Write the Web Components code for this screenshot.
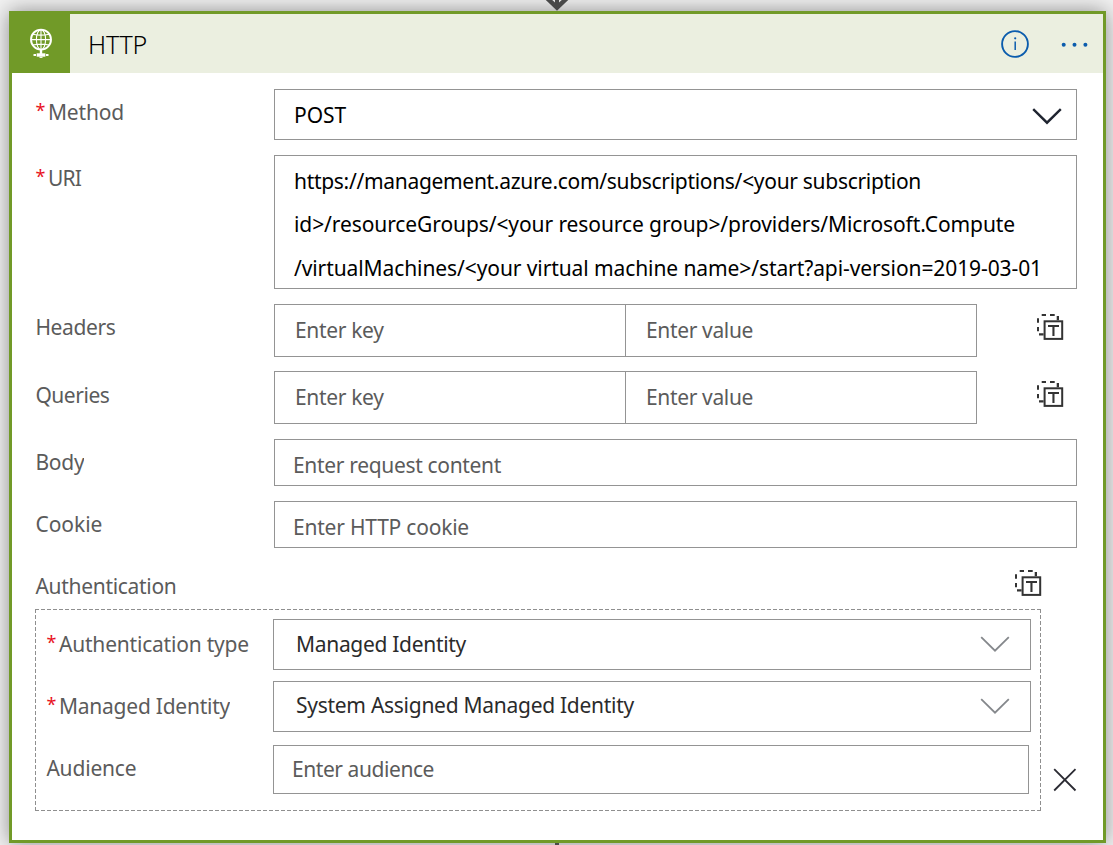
<!DOCTYPE html>
<html lang="en">
<head>
<meta charset="utf-8">
<title>HTTP action</title>
<style>
  html, body { margin: 0; height: 845px; overflow: hidden; }
  body { background: #f2f2f2; font-family: "Noto Sans", "Open Sans", sans-serif; font-size: 21px; color: #5b5b5b; }
</style>
</head>
<body>
<flow-canvas>
  <action-card>
    <fit-text slot="title" w="59" style="font-size:25px;line-height:30px;font-weight:350;color:#000">HTTP</fit-text>
    <form-row required style="--lt:11px"><fit-text slot="label" w="76">Method</fit-text>
      <select-box style="--h:51px;--pt:13px;--pl:19px;color:#000;--chev:#1f2430;--sw:2.4;--cr:14px"><fit-text w="52">POST</fit-text></select-box></form-row>
    <form-row required style="--gap:15px;--lt:11px"><fit-text slot="label" w="33">URI</fit-text>
      <text-box style="--h:134px;--pt:4px;--pl:19px;color:#000;line-height:43.4px"><fit-text w="627">https://management.azure.com/subscriptions/&lt;your subscription</fit-text><fit-text w="721">id&gt;/resourceGroups/&lt;your resource group&gt;/providers/Microsoft.Compute</fit-text><fit-text w="748">/virtualMachines/&lt;your virtual machine name&gt;/start?api-version=2019-03-01</fit-text></text-box></form-row>
    <form-row style="--gap:15px;--lt:11px"><fit-text slot="label" w="80">Headers</fit-text>
      <key-value></key-value></form-row>
    <form-row style="--gap:14px;--lt:12px"><fit-text slot="label" w="74">Queries</fit-text>
      <key-value></key-value></form-row>
    <form-row style="--gap:15px;--lt:11px"><fit-text slot="label" clip w="49">Body</fit-text>
      <text-box style="--h:47px;--pt:13px;--pl:18px"><fit-text w="208">Enter request content</fit-text></text-box></form-row>
    <form-row style="--gap:15px;--lt:11px"><fit-text slot="label" w="67">Cookie</fit-text>
      <text-box style="--h:47px;--pt:13px;--pl:18px"><fit-text w="176">Enter HTTP cookie</fit-text></text-box></form-row>
    <auth-group>
      <fit-text slot="heading" w="141">Authentication</fit-text>
      <form-row required style="--lt:13px"><fit-text slot="label" w="190">Authentication type</fit-text>
        <select-box style="--h:51px;--w:758px;--pt:12px;--pl:22px;color:#2b2b2b;--chev:#85888c;--sw:1.8;--cr:20px;--ct:16px"><fit-text w="170">Managed Identity</fit-text></select-box></form-row>
      <form-row required style="--gap:11px;--lt:13px"><fit-text slot="label" clip w="171">Managed Identity</fit-text>
        <select-box style="--h:51px;--w:758px;--pt:11px;--pl:22px;color:#2b2b2b;--chev:#85888c;--sw:1.8;--cr:20px;--ct:16px"><fit-text w="338">System Assigned Managed Identity</fit-text></select-box></form-row>
      <form-row style="--gap:13px;--lt:11px"><fit-text slot="label" w="90">Audience</fit-text>
        <text-box style="--h:49px;--w:756px;--pt:11px;--pl:18px"><fit-text w="142">Enter audience</fit-text></text-box></form-row>
    </auth-group>
  </action-card>
</flow-canvas>
<script>
const define = (name, html, setup) => {
  const t = document.createElement('template');
  t.innerHTML = html.trim();
  customElements.define(name, class extends HTMLElement {
    constructor() {
      super();
      this.attachShadow({ mode: 'open' }).append(t.content.cloneNode(true));
    }
    connectedCallback() { if (setup) setup(this); }
  });
};

// Canvas with the connector lines above and below the card
define('flow-canvas', `
<style>
  :host { display: block; position: relative; height: 845px; overflow: hidden; box-sizing: border-box; padding: 11px 7px 0 9px; }
  .top { position: absolute; left: 545px; top: 0; }
  .bottom { position: absolute; left: 555px; top: 843px; width: 4px; height: 2px; background: #4a4a4a; }
</style>
<slot></slot>
<svg class="top" width="24" height="11" viewBox="0 0 24 11"><path d="M.8 0H7.2L10 2.4V0H14V2.4L16.8 0H23.2L12 10.8Z" fill="#484848"/></svg>
<div class="bottom"></div>`);

define('action-card', `
<style>
  :host { display: block; box-sizing: border-box; width: 1097px; height: 832px; border: 3px solid #719a28; background: #fff; box-shadow: 0 0 20px rgba(0,0,0,.42); }
  header { display: flex; align-items: center; height: 59px; background: #ebefe0; }
  .brand { width: 58px; height: 59px; background: #719a28; }
  .brand svg, .tools svg { display: block; }
  .title { flex: 1; padding-left: 18px; }
  .tools { display: flex; align-items: center; gap: 30px; padding: 1px 14.5px 0 0; }
  main { padding: 16px 0 0 23px; }
</style>
<header>
  <div class="brand"><svg width="58" height="59" viewBox="12 14 58 59" fill="none" stroke="#fff">
    <circle cx="41" cy="39.6" r="10" stroke-width="1.9"/>
    <g stroke-width="1.1"><ellipse cx="41" cy="39.6" rx="4.6" ry="10"/><path d="M31 39.6H51M33 34.3Q41 36 49 34.3M33 45Q41 43.3 49 45M41 29.6V49.6" /></g>
    <path d="M41 49.5V54" stroke-width="2.4"/><path d="M33.5 55H36M46 55H48.5" stroke-width="2"/><path d="M36.7 55H45.4" stroke-width="3.4"/><path d="M39.5 57.3H42.5" stroke-width="1.2"/>
  </svg></div>
  <div class="title"><slot name="title"></slot></div>
  <div class="tools">
    <svg width="28" height="28" viewBox="0 0 28 28"><circle cx="14" cy="14" r="12.9" fill="none" stroke="#0b5cad" stroke-width="1.9"/><path d="M14.2 11.5V20" stroke="#0b5cad" stroke-width="1.5"/><circle cx="14.2" cy="8.3" r="1.1" fill="#0b5cad"/></svg>
    <svg width="30" height="6" viewBox="0 0 30 6" fill="#0b5cad"><circle cx="4.7" cy="3.8" r="2"/><circle cx="15.5" cy="3.8" r="2"/><circle cx="26.4" cy="3.8" r="2"/></svg>
  </div>
</header>
<main><slot></slot></main>`);

// Text set to a given advance width by letter spacing
define('fit-text', `
<style>
  :host { display: block; width: max-content; white-space: pre; }
  :host([clip]) { overflow: hidden; }
</style><slot></slot>`, el => {
  const w = +el.getAttribute('w');
  const n = el.textContent.length;
  const apply = () => {
    el.style.letterSpacing = '0px';
    el.style.letterSpacing = ((w - el.getBoundingClientRect().width) / n).toFixed(3) + 'px';
  };
  requestAnimationFrame(apply);
});

define('form-row', `
<style>
  :host { display: flex; margin-top: var(--gap, 0px); line-height: 24px; }
  .label { flex: none; display: flex; box-sizing: border-box; width: var(--lw, 239px); padding: var(--lt) 0 0 0.4px; }
  .star { display: none; width: 12.6px; height: 24px; line-height: 21px; color: #e81123; font-size: 18px; }
  :host([required]) .star { display: block; }
</style>
<div class="label"><span class="star">*</span><slot name="label"></slot></div>
<slot></slot>`);

define('text-box', `
<style>
  :host { display: block; box-sizing: border-box; width: var(--w, 803px); height: var(--h); border: 1px solid #949494; padding: var(--pt) 0 0 var(--pl); }
</style><slot></slot>`);

define('select-box', `
<style>
  :host { display: flex; justify-content: space-between; box-sizing: border-box; width: var(--w, 803px); height: var(--h); border: 1px solid #949494; padding: var(--pt) var(--cr) 0 var(--pl); }
  svg { flex: none; width: 30px; height: 17px; margin-top: calc(var(--ct, 18px) - var(--pt)); }
  path { fill: none; stroke: var(--chev); stroke-width: var(--sw); }
</style><slot></slot>
<svg viewBox="0 0 30 17"><path d="M1.2 1.2L15 14.7L28.8 1.2"/></svg>`);

define('mode-icon', `
<style>:host { display: block; width: 27px; height: 27px; } svg { display: block; }</style>
<svg width="27" height="27" viewBox="0 0 27 27" fill="#333">
  <rect x="7.6" y="7.3" width="17.6" height="17.6" fill="none" stroke="#333" stroke-width="2"/>
  <path d="M11 11H22V13H17.5V22H15.4V13H11ZM4.7 0H9V2H4.7ZM13 0H17.7V2H13ZM19.7 2H22V6.3H19.7ZM0 4.2H2V8.7H0ZM0 13H2V17.3H0ZM2 19.3H6.6V21.5H2Z"/>
</svg>`);

define('key-value', `
<style>
  :host { display: flex; flex: 1; }
  .cell { box-sizing: border-box; width: 352px; height: 53px; border: 1px solid #949494; padding: 13px 0 0 20px; }
  .cell + .cell { margin-left: -1px; }
  mode-icon { margin: 10px 0 0 60px; }
</style>
<div class="cell"><fit-text w="88.5">Enter key</fit-text></div>
<div class="cell"><fit-text w="107">Enter value</fit-text></div>
<mode-icon></mode-icon>`);

define('auth-group', `
<style>
  :host { display: block; line-height: 24px; }
  .head { display: flex; justify-content: space-between; box-sizing: border-box; height: 61px; width: 1007px; padding: 22px 0.5px 0 0.5px; }
  .heading { padding-top: 4px; }
  .wrap { display: flex; }
  .box {
    --lw: 227px; --d: #8f8f8f 0 4px, transparent 4px 6px;
    flex: none; box-sizing: border-box; width: 1006px; height: 202px; padding: 10px 0 0 11px;
    background:
      repeating-linear-gradient(90deg, var(--d)) top / 100% 1px no-repeat,
      repeating-linear-gradient(90deg, var(--d)) bottom / 100% 1px no-repeat,
      repeating-linear-gradient(180deg, var(--d)) left / 1px 100% no-repeat,
      repeating-linear-gradient(180deg, var(--d)) right / 1px 100% no-repeat;
  }
  .close { margin: 158.5px 0 0 12px; }
</style>
<div class="head"><div class="heading"><slot name="heading"></slot></div><mode-icon></mode-icon></div>
<div class="wrap"><div class="box"><slot></slot></div>
<svg class="close" width="24" height="24" viewBox="0 0 24 24"><path d="M1.2 1.2L22.5 22.5M22.5 1.2L1.2 22.5" stroke="#2b2b33" stroke-width="1.8"/></svg></div>`);
</script>
</body>
</html>
